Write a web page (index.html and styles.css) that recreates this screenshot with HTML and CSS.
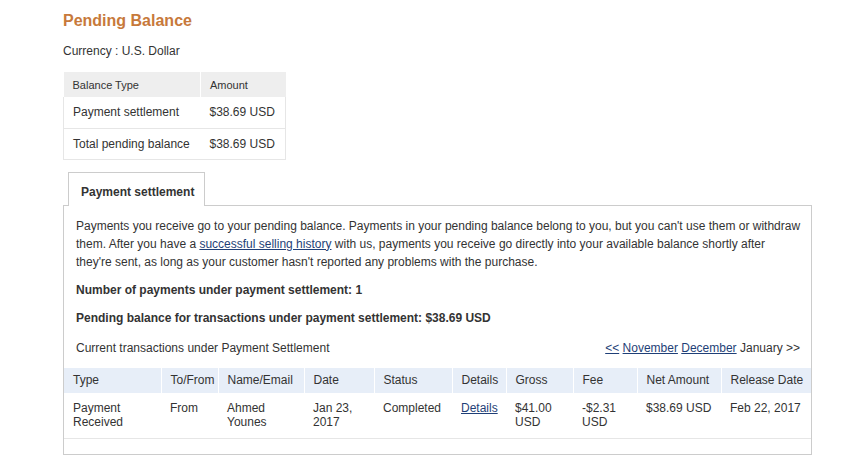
FILE: index.html
```html
<!DOCTYPE html>
<html>
<head>
<meta charset="utf-8">
<link rel="stylesheet" href="styles.css">
</head>
<body>
<div class="page">
  <h1 class="title">Pending Balance</h1>
  <div class="currency">Currency : U.S. Dollar</div>
  <table class="balance">
    <thead>
      <tr><th class="bt-type">Balance Type</th><th class="bt-amount">Amount</th></tr>
    </thead>
    <tbody>
      <tr><td>Payment settlement</td><td>$38.69 USD</td></tr>
      <tr><td>Total pending balance</td><td>$38.69 USD</td></tr>
    </tbody>
  </table>

  <div class="tabs">
    <div class="tab">Payment settlement</div>
  </div>
  <div class="panel">
    <p class="intro">Payments you receive go to your pending balance. Payments in your pending balance belong to you, but you can't use them or withdraw them. After you have a <a href="#">successful selling history</a> with us, payments you receive go directly into your available balance shortly after they're sent, as long as your customer hasn't reported any problems with the purchase.</p>
    <p class="strong">Number of payments under payment settlement: 1</p>
    <p class="strong strong2">Pending balance for transactions under payment settlement: $38.69 USD</p>
    <div class="caption-row">
      <span>Current transactions under Payment Settlement</span>
      <span class="pager"><a href="#">&lt;&lt;</a> <a href="#">November</a> <a href="#">December</a> January &gt;&gt;</span>
    </div>
    <table class="tx">
      <colgroup>
        <col class="c1"><col class="c2"><col class="c3"><col class="c4"><col class="c5">
        <col class="c6"><col class="c7"><col class="c8"><col class="c9"><col class="c10">
      </colgroup>
      <thead>
        <tr>
          <th>Type</th><th>To/From</th><th>Name/Email</th><th>Date</th><th>Status</th>
          <th>Details</th><th>Gross</th><th>Fee</th><th>Net Amount</th><th>Release Date</th>
        </tr>
      </thead>
      <tbody>
        <tr>
          <td>Payment<br>Received</td>
          <td>From</td>
          <td>Ahmed<br>Younes</td>
          <td>Jan 23,<br>2017</td>
          <td>Completed</td>
          <td><a href="#">Details</a></td>
          <td>$41.00<br>USD</td>
          <td>-$2.31<br>USD</td>
          <td>$38.69 USD</td>
          <td>Feb 22, 2017</td>
        </tr>
      </tbody>
    </table>
  </div>
</div>
</body>
</html>
```

FILE: styles.css
```css
* { box-sizing: border-box; }

body {
  margin: 0;
  font-family: Arial, "Liberation Sans", sans-serif;
  font-size: 12px;
  color: #333;
  background: #fff;
}

a { color: #1f3f77; text-decoration: underline; }

.page {
  padding: 11px 0 0 63px;
  width: 812px;
}

.title {
  margin: 0;
  font-size: 16px;
  line-height: 20px;
  font-weight: bold;
  color: #c7793b;
}

.currency {
  margin-top: 12px;
  line-height: 16px;
}

.balance {
  margin-top: 13px;
  border-collapse: collapse;
  width: 223px;
}

.balance th {
  background: #eeeeee;
  font-size: 11px;
  font-weight: normal;
  text-align: left;
  height: 25px;
  padding: 0 9px;
}

.balance th + th { border-left: 1px solid #fff; }

.bt-type { width: 137px; }

.balance td {
  height: 31px;
  padding: 0 9px;
  border-bottom: 1px solid #e6e6e6;
}

.balance tbody td:first-child { border-left: 1px solid #e6e6e6; }
.balance tbody td:last-child { border-right: 1px solid #e6e6e6; }

.tabs {
  margin-top: 12px;
  display: flex;
  padding-left: 5px;
}

.tab {
  position: relative;
  z-index: 1;
  width: 137px;
  white-space: nowrap;
  background: #fff;
  border: 1px solid #cccccc;
  border-bottom: none;
  padding: 10px 8px 5px 12px;
  line-height: 18px;
  font-weight: bold;
  margin-bottom: -1px;
}

.panel {
  border: 1px solid #cccccc;
  width: 749px;
  padding: 11px 0 15px;
}

.panel p {
  margin: 0;
  padding: 0 12px;
  line-height: 18px;
}

.panel .intro { padding-right: 10px; }

.panel .strong {
  font-weight: bold;
  margin-top: 10px;
}

.caption-row {
  display: flex;
  justify-content: space-between;
  padding: 0 11px 0 12px;
  margin-top: 12px;
  line-height: 18px;
}

.tx {
  margin-top: 11px;
  width: 747px;
  border-collapse: collapse;
  table-layout: fixed;
}

.tx .c1 { width: 97px; }
.tx .c2 { width: 57px; }
.tx .c3 { width: 86px; }
.tx .c4 { width: 70px; }
.tx .c5 { width: 78px; }
.tx .c6 { width: 54px; }
.tx .c7 { width: 67px; }
.tx .c8 { width: 64px; }
.tx .c9 { width: 84px; }
.tx .c10 { width: 90px; }

.tx th {
  background: #e7eef8;
  font-weight: normal;
  font-size: 12px;
  text-align: left;
  height: 25px;
  padding: 0 9px;
  white-space: nowrap;
}

.tx th + th { border-left: 1px solid #fff; }

.tx td {
  vertical-align: top;
  padding: 8px 9px 9px;
  line-height: 14px;
  border-bottom: 1px solid #e6e6e6;
}
```
